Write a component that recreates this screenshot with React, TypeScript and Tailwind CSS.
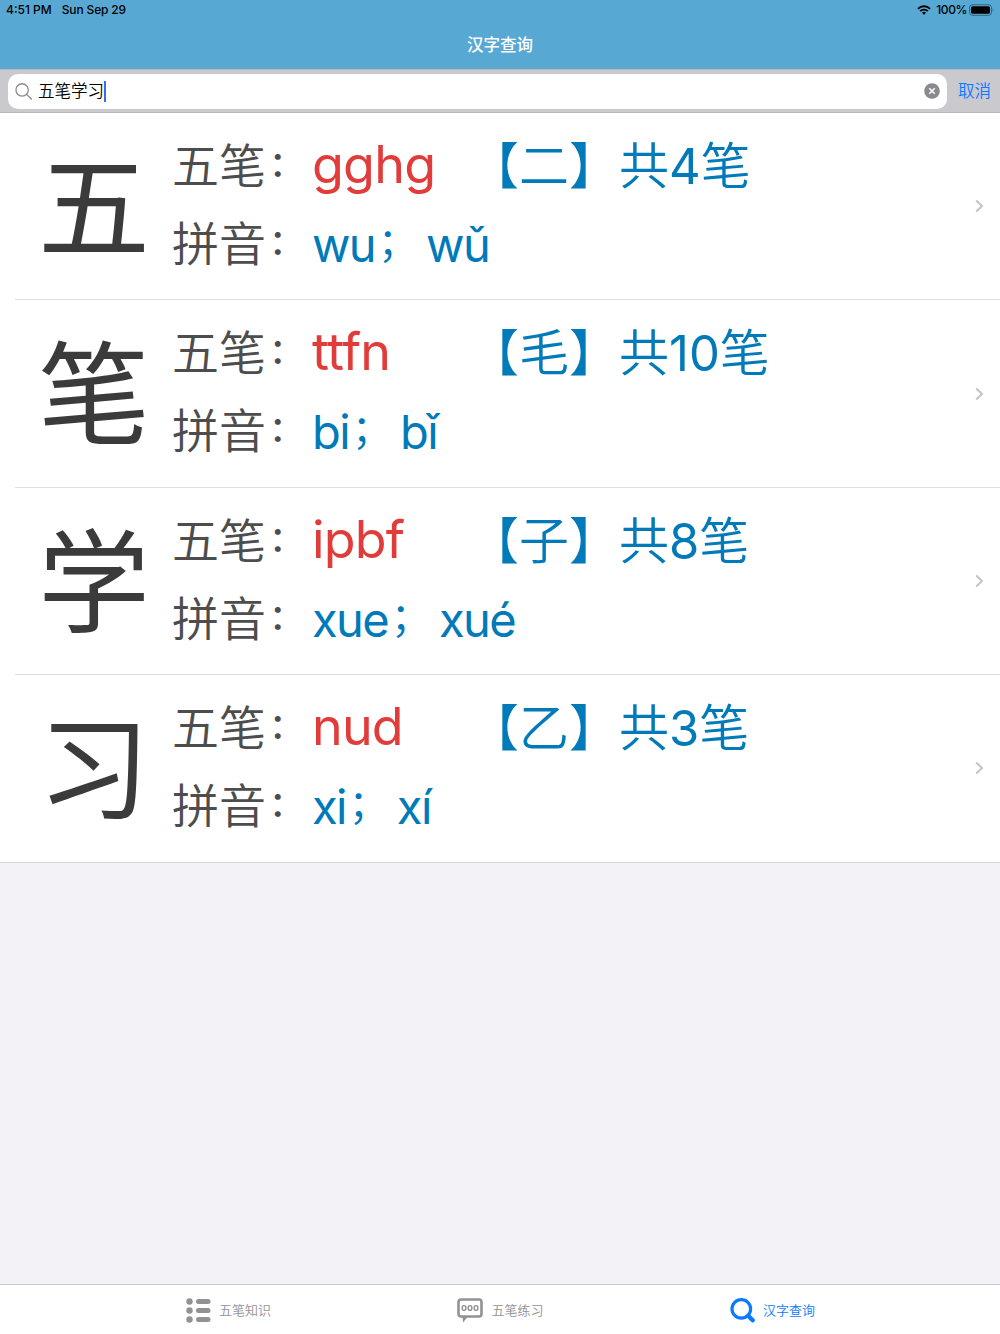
import type { ReactNode } from 'react';

type Entry = {
  char: string;
  code: string;
  pinyin: [string, string];
  radical: string;
  strokes: number;
};

const entries: Entry[] = [
  { char: '五', code: 'gghg', pinyin: ['wu', 'wǔ'], radical: '二', strokes: 4 },
  { char: '笔', code: 'ttfn', pinyin: ['bi', 'bǐ'], radical: '毛', strokes: 10 },
  { char: '学', code: 'ipbf', pinyin: ['xue', 'xué'], radical: '子', strokes: 8 },
  { char: '习', code: 'nud', pinyin: ['xi', 'xí'], radical: '乙', strokes: 3 },
];

function StatusBar() {
  return (
    <div className="flex h-5 items-center justify-between pl-[6px] pr-[6px] text-[12px] font-medium leading-5 text-black">
      <div className="flex gap-[10px]">
        <span>4:51 PM</span>
        <span className="tracking-[-0.15px]">Sun Sep 29</span>
      </div>
      <div className="flex items-center">
        <svg className="mr-[5px] h-[10px] w-[14px]" viewBox="0 0 14 10" fill="none" stroke="#000" strokeWidth="1.9">
          <path d="M0.9 3.8a8.6 8.6 0 0 1 12.2 0" />
          <path d="M3.2 6.2a5.4 5.4 0 0 1 7.6 0" />
          <path d="M7 9.8L5 7.8a2.9 2.9 0 0 1 4 0z" fill="#000" stroke="none" />
        </svg>
        <span className="tracking-[-0.4px]">100%</span>
        <svg className="ml-[2px] h-3 w-[25px]" viewBox="0 0 25 12" fill="none">
          <rect x="0.5" y="0.7" width="22" height="10.6" rx="3" stroke="#000" strokeOpacity="0.4" />
          <rect x="2" y="2.2" width="19" height="7.6" rx="1.7" fill="#000" />
          <path d="M23.7 4.2v3.6c1-.3 1-3.3 0-3.6z" fill="#000" fillOpacity="0.4" />
        </svg>
      </div>
    </div>
  );
}

function SearchBar() {
  return (
    <div className="flex h-[44px] items-center border-y border-[#b9b9be] bg-[#c9c9ce] pl-2">
      <div className="flex h-[35px] w-[939px] items-center rounded-[10px] bg-white pl-[7px] pr-[7px]">
        <svg className="h-[17px] w-[17px]" viewBox="0 0 16 16" fill="none" stroke="#8a8a8e" strokeWidth="1.2" strokeLinecap="round">
          <circle cx="6.7" cy="6.5" r="5.8" />
          <path d="M10.9 10.7l4.5 4.4" />
        </svg>
        <span className="ml-[6px] text-[16.5px] font-[350] leading-6 text-black">五笔学习</span>
        <span className="h-[21px] w-[2px] bg-[#4169ee]" />
        <svg className="ml-auto h-4 w-4" viewBox="0 0 16 16">
          <circle cx="8" cy="8" r="7.8" fill="#8a8a8e" />
          <path d="M5.3 5.3l5.4 5.4M10.7 5.3l-5.4 5.4" stroke="#fff" strokeWidth="1.6" />
        </svg>
      </div>
      <button className="ml-[11px] text-[16.5px] font-[350] leading-6 text-[#0a7aff]">取消</button>
    </div>
  );
}

function Label({ text }: { text: string }) {
  return (
    <span className="flex w-[140px] text-[47px] font-[350] leading-[78px] text-[#4d4d4d]">
      {text}
      <span className="-mt-[2px] pl-[3px] text-[35px] font-medium">：</span>
    </span>
  );
}

function EntryRow({ entry, last }: { entry: Entry; last: boolean }) {
  return (
    <li className="flex h-[187.4px] pl-[15px]">
      <div className={`flex grow border-b pl-6 ${last ? 'border-transparent' : 'border-[#dededf]'}`}>
        <div className="w-[133px] pt-[17px] text-[112px] leading-[156px] text-[#3b3b3b]">
          <span className="-ml-[1px]">{entry.char}</span>
        </div>
        <div className="grow pt-[14px] whitespace-nowrap">
          <div className="flex h-[78px] leading-[78px]">
            <Label text="五笔" />
            <span className="-mt-[1px] w-[157px] text-[52px] tracking-[-0.8px] text-[#e13c3a] [font-feature-settings:'calt'_0,'liga'_0]">{entry.code}</span>
            <span className="text-[50px] font-[350] text-[#007ab8]">
              【{entry.radical}】共<span className="text-[49px] font-normal">{entry.strokes}</span>笔
            </span>
          </div>
          <div className="flex h-[78px] leading-[80px]">
            <Label text="拼音" />
            <span className="flex text-[47px] tracking-[-1.6px] text-[#007ab8]">
              {entry.pinyin[0]}
              <span className="-mt-[3px] w-[51px] pl-[3px] text-[39px]">；</span>
              {entry.pinyin[1]}
            </span>
          </div>
        </div>
        <svg className="mr-[16px] h-[14px] w-[9px] self-center" viewBox="0 0 9 14" fill="none" stroke="#c4c4c7" strokeWidth="2">
          <path d="M1.2 1.5L7 7l-5.8 5.5" />
        </svg>
      </div>
    </li>
  );
}

function Tab({ label, active, icon }: { label: string; active?: boolean; icon: ReactNode }) {
  return (
    <button className={`flex w-[272px] items-center justify-center gap-2 pt-[2px] pl-[1px] text-[13px] font-[350] ${active ? 'text-[#0a7aff]' : 'text-[#929292]'}`}>
      {icon}
      <span>{label}</span>
    </button>
  );
}

export default function App() {
  return (
    <div className="flex h-[1334px] w-[1000px] flex-col overflow-hidden bg-[#f2f2f7] font-[Inter,'Noto_Sans_CJK_SC',sans-serif]">
      <header className="h-[69px] bg-[#58a8d4]">
        <StatusBar />
        <h1 className="text-center text-[16.5px] font-medium leading-[50px] text-white">汉字查询</h1>
      </header>
      <SearchBar />
      <ul className="h-[749.5px] border-b border-[#d5d5d9] bg-white">
        {entries.map((entry, i) => (
          <EntryRow key={entry.char} entry={entry} last={i === entries.length - 1} />
        ))}
      </ul>
      <nav className="mt-auto flex h-[50px] justify-center border-t border-[#c6c6cb] bg-white">
        <Tab
          label="五笔知识"
          icon={
            <svg className="h-[25px] w-[25px]" viewBox="0 0 25 25" fill="#929292">
              <circle cx="3.5" cy="3.5" r="3.2" />
              <circle cx="3.5" cy="12.5" r="3.2" />
              <circle cx="3.5" cy="21.5" r="3.2" />
              <rect x="10" y="1" width="14.5" height="5" rx="2.5" />
              <rect x="10" y="10" width="14.5" height="5" rx="2.5" />
              <rect x="10" y="19" width="14.5" height="5" rx="2.5" />
            </svg>
          }
        />
        <Tab
          label="五笔练习"
          icon={
            <svg className="h-[25px] w-[26px]" viewBox="0 0 26 25" fill="none" stroke="#929292">
              <rect x="1.5" y="1.5" width="23" height="17" rx="2.5" strokeWidth="2.6" />
              <path d="M5.5 19h5L6 24.5z" fill="#929292" stroke="none" />
              <g strokeWidth="1.4">
                <ellipse cx="7" cy="10" rx="1.9" ry="2.4" />
                <ellipse cx="13" cy="10" rx="1.9" ry="2.4" />
                <ellipse cx="19" cy="10" rx="1.9" ry="2.4" />
              </g>
            </svg>
          }
        />
        <Tab
          label="汉字查询"
          active
          icon={
            <svg className="h-[25px] w-[25px]" viewBox="0 0 25 25" fill="none" stroke="#0a7aff" strokeLinecap="round">
              <circle cx="11.3" cy="10.9" r="9.3" strokeWidth="3.2" />
              <path d="M18.4 18l4.3 4.3" strokeWidth="4.4" />
            </svg>
          }
        />
      </nav>
    </div>
  );
}
